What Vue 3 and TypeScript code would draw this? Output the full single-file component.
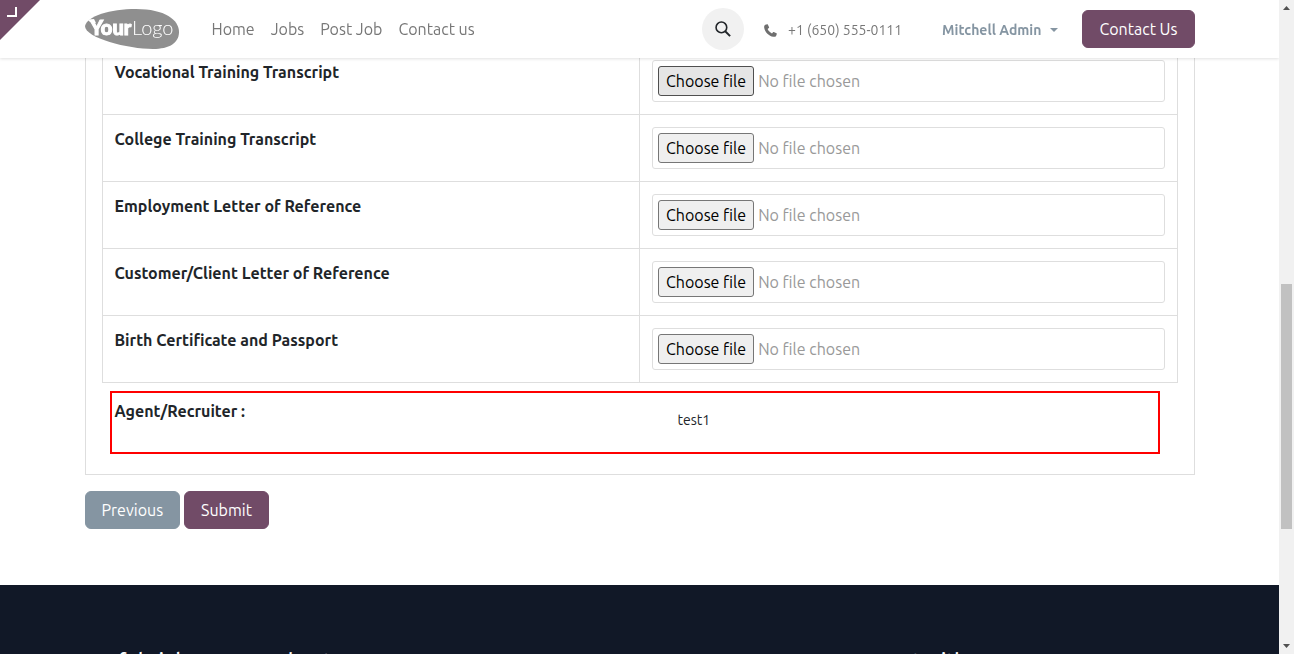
<script setup lang="ts">
import { ref } from 'vue'

interface NavItem {
  label: string
  href: string
}

interface DocumentField {
  id: string
  label: string
  hovered?: boolean
}

const navItems: NavItem[] = [
  { label: 'Home', href: '#home' },
  { label: 'Jobs', href: '#jobs' },
  { label: 'Post Job', href: '#post-job' },
  { label: 'Contact us', href: '#contact' },
]

const documents: DocumentField[] = [
  { id: 'vocational', label: 'Vocational Training Transcript', hovered: true },
  { id: 'college', label: 'College Training Transcript' },
  { id: 'employment', label: 'Employment Letter of Reference' },
  { id: 'client', label: 'Customer/Client Letter of Reference' },
  { id: 'passport', label: 'Birth Certificate and Passport' },
]

const chosen = ref<Record<string, string>>({})
const agent = ref('test1')

function onFile(id: string, event: Event) {
  const input = event.target as HTMLInputElement
  chosen.value[id] = input.files?.[0]?.name ?? ''
}
</script>

<template>
  <div class="window">
    <div class="page">
      <header class="header">
        <div class="container bar">
          <a class="logo" href="#home" aria-label="Your Logo">
            <svg width="95" height="42" viewBox="0 0 95 42">
              <path
                d="M0 18C2 8 25 1 51 1C80 1 94 12 94 24C94 35 84 41 68 41C43 41 0 30 0 18Z"
                fill="#8f8f8f"
              />
              <path d="M3 12L9 11L11 15L5 14Z" fill="#fff" />
              <text x="5" y="27" class="logo-bold">Your</text>
              <text x="47" y="27" class="logo-thin">Logo</text>
            </svg>
          </a>
          <nav class="nav">
            <a v-for="item in navItems" :key="item.href" :href="item.href">{{ item.label }}</a>
          </nav>
          <div class="tools">
            <button class="search" type="button" aria-label="Search">
              <svg width="16" height="16" viewBox="0 0 18 18" fill="none" stroke="#212529" stroke-width="1.8">
                <circle cx="7.2" cy="7.2" r="6" />
                <path d="M11.5 11.5L17 17" stroke-width="2.2" />
              </svg>
            </button>
            <a class="phone" href="tel:+16505550111">
              <svg width="13" height="13" viewBox="0 0 13 13">
                <path
                  d="M3.2 0.2L1.3 0.8C0.3 1.3 0 2.5 0.2 3.7C1 8.2 4.900 12.100 9.300 12.800C10.500 13 11.700 12.700 12.200 11.700L12.800 9.900C12.900 9.600 12.700 9.400 12.500 9.300L9.800 8C9.500 7.800 9.200 7.900 9 8.200L8 9.400C6 8.500 4.500 7 3.600 5L4.800 4C5.100 3.800 5.200 3.500 5.100 3.200L3.800 0.500C3.700 0.200 3.500 0.100 3.200 0.200Z"
                  fill="#6f6f6f"
                />
              </svg>
              <span>+1 (650) 555-0111</span>
            </a>
            <button class="user" type="button">
              <span>Mitchell Admin</span>
              <svg width="8" height="4" viewBox="0 0 8 4"><path d="M0 0H8L4 4Z" fill="#8595a2" /></svg>
            </button>
            <a class="btn primary" href="#contact">Contact Us</a>
          </div>
        </div>
        <a class="corner" href="#backend" aria-label="Open backend">
          <svg width="40" height="40" viewBox="0 0 40 40">
            <path d="M0 0H40L0 40Z" fill="#714b67" />
            <path d="M7 16H16V7" fill="none" stroke="#fff" stroke-width="2" />
          </svg>
        </a>
      </header>

      <main class="container main">
        <form @submit.prevent>
          <section class="panel">
            <table class="documents">
              <tbody>
                <tr v-for="doc in documents" :key="doc.id">
                  <th scope="row"><label :for="doc.id">{{ doc.label }}</label></th>
                  <td>
                    <div class="file">
                      <span class="choose" :class="{ hovered: doc.hovered }">Choose file</span>
                      <span class="name">{{ chosen[doc.id] || 'No file chosen' }}</span>
                      <input :id="doc.id" type="file" @change="onFile(doc.id, $event)" />
                    </div>
                  </td>
                </tr>
              </tbody>
            </table>
            <div class="agent">
              <label for="agent">Agent/Recruiter :</label>
              <input id="agent" v-model="agent" type="text" readonly />
            </div>
          </section>
          <div class="actions">
            <button class="btn secondary" type="button">Previous</button>
            <button class="btn primary" type="submit">Submit</button>
          </div>
        </form>
      </main>

      <footer class="footer">
        <div class="container columns">
          <h5>Useful Links</h5>
          <h5>About us</h5>
          <h5>Connect with us</h5>
        </div>
      </footer>
    </div>

    <div class="scrollbar" aria-hidden="true">
      <svg width="7" height="4" viewBox="0 0 7 4"><path d="M0 4H7L3.500 0Z" fill="#505050" /></svg>
      <div class="track">
        <div class="thumb"></div>
      </div>
      <svg width="7" height="4" viewBox="0 0 7 4"><path d="M0 0H7L3.500 4Z" fill="#505050" /></svg>
    </div>
  </div>
</template>

<style>
body {
  background: #fff;
}
</style>

<style scoped>
* {
  box-sizing: border-box;
}

.window {
  display: flex;
  height: 100vh;
  overflow: hidden;
  color: #212529;
  font-family: Ubuntu, "Noto Sans", sans-serif;
  font-size: 16px;
  line-height: 24px;
}

.page {
  flex: 1;
  min-width: 0;
  display: flex;
  flex-direction: column;
  overflow: hidden;
}

.container {
  width: calc(100% - 30px);
  max-width: 1110px;
  margin: 0 auto;
}

a {
  color: inherit;
  text-decoration: none;
}

button,
input {
  font: inherit;
}

.header {
  position: relative;
  z-index: 2;
  flex: none;
  height: 58px;
  background: #fff;
  box-shadow: 0 1px 3px rgba(0, 0, 0, 0.12);
}

.bar {
  display: flex;
  align-items: center;
  height: 58px;
}

.logo {
  display: flex;
  margin-right: 32px;
}

.logo-bold {
  fill: #fff;
  stroke: #fff;
  stroke-width: 1;
  font: 900 20px Lato, sans-serif;
}

.logo-thin {
  fill: #fff;
  font: 300 20px Lato, sans-serif;
}

.nav {
  display: flex;
  gap: 16px;
  color: #777;
}

.tools {
  display: flex;
  align-items: center;
  margin-left: auto;
}

.search {
  display: flex;
  align-items: center;
  justify-content: center;
  width: 42px;
  height: 42px;
  margin-right: 20px;
  padding: 0;
  border: 0;
  border-radius: 50%;
  background: #f1f1f1;
}

.phone {
  display: flex;
  align-items: center;
  gap: 11px;
  margin-right: 40px;
  color: #777;
  font-size: 14px;
}

.phone,
.user {
  padding: 2px 0 0;
}

.user {
  display: flex;
  align-items: center;
  gap: 9px;
  margin-right: 24px;
  border: 0;
  background: none;
  color: #8595a2;
  font-size: 14px;
  font-weight: 700;
}

.btn {
  padding: 6px 16px;
  border: 1px solid transparent;
  border-radius: 6px;
  color: #fff;
  line-height: 24px;
}

.primary {
  border-color: #714b67;
  background: #714b67;
}

.secondary {
  border-color: #8595a2;
  background: #8595a2;
}

.corner {
  position: absolute;
  top: 0;
  left: 0;
  display: flex;
}

.main {
  flex: none;
  margin-top: -28px;
}

.panel {
  padding: 16px 16px 20px;
  border: 1px solid #dedede;
}

.documents {
  width: 100%;
  table-layout: fixed;
  border-collapse: collapse;
}

.documents th,
.documents td {
  padding: 12px;
  border: 1px solid #dedede;
  text-align: left;
  vertical-align: top;
}

.documents th {
  font-weight: 700;
}

.documents label {
  display: block;
}

.file {
  position: relative;
  display: flex;
  align-items: center;
  gap: 4px;
  height: 42px;
  padding: 0 5px;
  border: 1px solid #dedede;
  border-radius: 3px;
}

.file input {
  position: absolute;
  inset: 0;
  width: 100%;
  height: 100%;
  opacity: 0;
}

.choose {
  padding: 2px 7px;
  border: 1px solid #767676;
  border-radius: 3px;
  background: #efefef;
  color: #000;
}

.choose.hovered {
  border-color: #4f4f4f;
  background: #e5e5e5;
}

.name {
  color: #999;
}

.agent {
  display: grid;
  grid-template-columns: 547px 1fr;
  align-items: start;
  margin: 8px 18px 0 8px;
  padding: 6px 3px 9px;
  border: 2px solid #f00;
}

.agent label {
  font-weight: 700;
}

.agent input {
  width: 100%;
  height: 44px;
  padding: 0 16px 2px;
  border: 0;
  background: transparent;
  color: #212529;
  font-size: 14px;
}

.actions {
  display: flex;
  gap: 4px;
  margin-top: 16px;
}

.footer {
  flex: none;
  margin-top: 56px;
  padding-top: 64px;
  background: #111827;
  color: #fff;
}

.columns {
  display: grid;
  grid-template-columns: 190px 570px 1fr;
}

.columns h5 {
  margin: 0;
  font-size: 20px;
  font-weight: 500;
  line-height: 24px;
}

.scrollbar {
  flex: none;
  display: flex;
  flex-direction: column;
  align-items: center;
  gap: 6px;
  width: 15px;
  padding: 6px 0;
  background: #f1f1f1;
}

.track {
  flex: 1;
  width: 11px;
  display: grid;
  grid-template-rows: 268fr 245fr 109fr;
}

.thumb {
  grid-row: 2;
  background: #c1c1c1;
}
</style>
